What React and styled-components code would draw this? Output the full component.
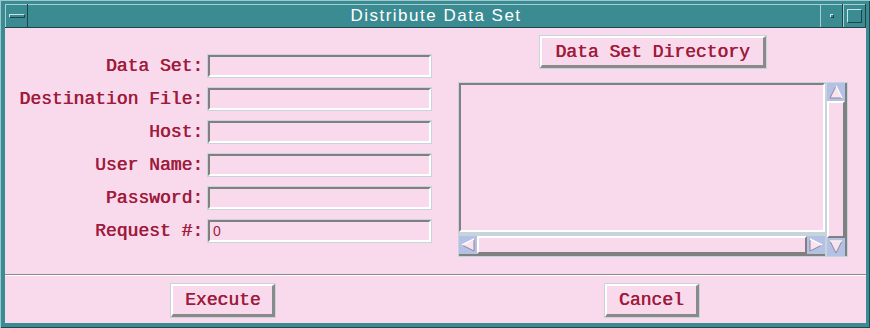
import styled, { createGlobalStyle } from "styled-components";

const Global = createGlobalStyle`
  body {
    margin: 0;
    background: #f9daec;
  }
`;

const mono = `"Liberation Mono", "Courier New", monospace`;
const ink = "#a01a3c";
const pink = "#f9daec";

function Arrow({ dir }) {
  const pts = {
    up: "8,2 14,14 2,14",
    down: "2,2 14,2 8,14",
    left: "2,8 14,2 14,14",
    right: "14,8 2,2 2,14",
  }[dir];
  return (
    <svg width="16" height="16" viewBox="0 0 16 16">
      <polygon points={pts} fill="#fbe2f0" stroke="#8a8a9a" strokeWidth="1" />
      <polyline points={pts.split(" ").slice(0, 2).join(" ")} stroke="#fff" strokeWidth="1.5" fill="none" />
    </svg>
  );
}

function DistributeDataSet() {
  const fields = [
    ["Data Set:", ""],
    ["Destination File:", ""],
    ["Host:", ""],
    ["User Name:", ""],
    ["Password:", ""],
    ["Request #:", "0"],
  ];

  return (
    <Frame>
      <TitleBar>
        <TitleBox>
          <MinBar />
        </TitleBox>
        <Title>Distribute Data Set</Title>
        <TitleBox>
          <Dot />
        </TitleBox>
        <TitleBox>
          <MaxSquare />
        </TitleBox>
      </TitleBar>
      <Body>
        <Main>
          <Form>
            {fields.map(([label, value]) => (
              <Row key={label}>
                <Label>{label}</Label>
                <Field defaultValue={value} />
              </Row>
            ))}
          </Form>
          <Side>
            <Button $w={226} $h={32}>Data Set Directory</Button>
            <ScrollPane>
              <List />
              <HScroll>
                <ArrowBtn><Arrow dir="left" /></ArrowBtn>
                <Trough />
                <ArrowBtn><Arrow dir="right" /></ArrowBtn>
              </HScroll>
              <VScroll>
                <ArrowBtn><Arrow dir="up" /></ArrowBtn>
                <Trough />
                <ArrowBtn><Arrow dir="down" /></ArrowBtn>
              </VScroll>
            </ScrollPane>
          </Side>
        </Main>
        <Footer>
          <Button $w={104} $h={33}>Execute</Button>
          <Button $w={94} $h={33}>Cancel</Button>
        </Footer>
      </Body>
    </Frame>
  );
}

export default function App() {
  return (
    <>
      <Global />
      <DistributeDataSet />
    </>
  );
}

const Frame = styled.div`
  box-sizing: border-box;
  width: 870px;
  height: 328px;
  padding: 4px 4px 5px 5px;
  background: #3b8b92;
  box-shadow: inset 1px 1px 0 #9cc8cc, inset -1px -1px 0 #1d4a50;
  display: flex;
  flex-direction: column;
`;

const TitleBar = styled.div`
  box-sizing: border-box;
  height: 24px;
  display: flex;
  align-items: stretch;
  border-bottom: 1px solid #1d4448;
  box-shadow: inset 0 1px 0 #a8d0d4;
`;

const TitleBox = styled.div`
  width: 23px;
  display: flex;
  align-items: center;
  justify-content: center;
  box-shadow: inset 1px 0 0 #a8d0d4, inset -1px 0 0 #1d4448;
`;

const MinBar = styled.div`
  width: 14px;
  height: 2px;
  border: 1px solid #c8e4e6;
  border-right-color: #1d4448;
  border-bottom-color: #1d4448;
`;

const Dot = styled.div`
  width: 2px;
  height: 2px;
  border: 1px solid #c8e4e6;
  border-right-color: #1d4448;
  border-bottom-color: #1d4448;
`;

const MaxSquare = styled.div`
  width: 13px;
  height: 12px;
  border: 1px solid #c8e4e6;
  border-right-color: #1d4448;
  border-bottom-color: #1d4448;
`;

const Title = styled.div`
  flex: 1;
  display: flex;
  align-items: center;
  justify-content: center;
  color: #fff;
  font-family: "Liberation Sans", Arial, sans-serif;
  font-size: 17px;
  letter-spacing: 1.5px;
  padding: 1px 0 0 24px;
`;

const Body = styled.div`
  flex: 1;
  background: ${pink};
  display: flex;
  flex-direction: column;
`;

const Main = styled.div`
  flex: 1;
  display: flex;
`;

const Form = styled.div`
  padding-top: 27px;
  display: flex;
  flex-direction: column;
  gap: 11px;
`;

const Row = styled.div`
  display: grid;
  grid-template-columns: 198px 223px;
  column-gap: 5px;
  align-items: center;
`;

const Label = styled.span`
  text-align: right;
  font-family: ${mono};
  font-size: 18px;
  color: ${ink};
  text-shadow: 0.6px 0 0 ${ink};
  white-space: pre;
`;

const Field = styled.input`
  box-sizing: border-box;
  height: 22px;
  width: 223px;
  margin: 0;
  padding: 0 0 0 3px;
  background: ${pink};
  border: 2px solid;
  border-color: #808080 #fff #fff #808080;
  box-shadow: 0 0 0 1px #c6d4dc;
  font-family: "Liberation Sans", Arial, sans-serif;
  font-size: 14px;
  color: ${ink};
  outline: none;
`;

const Side = styled.div`
  margin-left: 27px;
  width: 390px;
  padding-top: 8px;
  display: flex;
  flex-direction: column;
  align-items: center;
  gap: 14px;
`;

const Button = styled.button`
  box-sizing: border-box;
  width: ${(p) => p.$w}px;
  height: ${(p) => p.$h}px;
  margin: 0;
  padding: 0;
  background: ${pink};
  border-style: solid;
  border-width: 2px 3px 3px 2px;
  border-color: #fff #8a8a8a #8a8a8a #fff;
  box-shadow: 0 0 0 1px #c6d4dc;
  font-family: ${mono};
  font-size: 18px;
  color: ${ink};
  text-shadow: 0.6px 0 0 ${ink};
  white-space: pre;
  cursor: pointer;
`;

const ScrollPane = styled.div`
  width: 390px;
  height: 175px;
  display: grid;
  grid-template-columns: 1fr 21px;
  grid-template-rows: 1fr 21px;
  column-gap: 2px;
  row-gap: 4px;
  background: #c6d4dc;
`;

const List = styled.div`
  margin: 1px 0 0 1px;
  background: ${pink};
  border: 2px solid;
  border-color: #808080 #fff #fff #808080;
`;

const HScroll = styled.div`
  grid-column: 1;
  grid-row: 2;
  margin: 0 0 1px 1px;
  display: flex;
  background: #b4c0e4;
  border-bottom: 2px solid #808080;
`;

const VScroll = styled.div`
  grid-column: 2;
  grid-row: 1 / span 2;
  margin: 1px 1px 1px 0;
  display: flex;
  flex-direction: column;
  background: #b4c0e4;
  border-right: 2px solid #808080;
`;

const ArrowBtn = styled.div`
  flex: none;
  width: 18px;
  height: 18px;
  display: flex;
  align-items: center;
  justify-content: center;
`;

const Trough = styled.div`
  flex: 1;
  background: ${pink};
  border: 2px solid;
  border-color: #fff #808080 #808080 #fff;
`;

const Footer = styled.div`
  box-sizing: border-box;
  height: 49px;
  display: grid;
  grid-template-columns: 1fr 1fr;
  justify-items: center;
  align-items: start;
  padding: 9px 0 0 4px;
  border-top: 1px solid #8a8a8a;
  box-shadow: inset 0 1px 0 #fff;
`;
